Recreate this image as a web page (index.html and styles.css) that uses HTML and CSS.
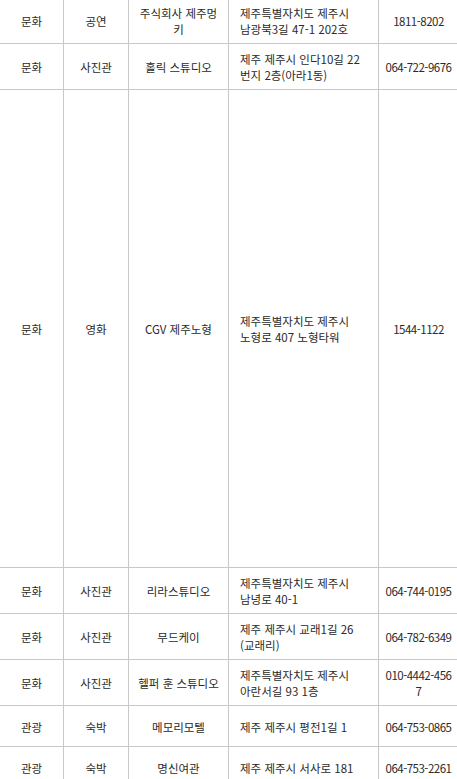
FILE: index.html
```html
<!DOCTYPE html>
<html lang="ko">
<head>
<meta charset="utf-8">
<title>목록</title>
<link rel="stylesheet" href="styles.css">
</head>
<body>
<table class="list">
  <tbody>
    <tr>
      <td class="c1">문화</td>
      <td class="c2">공연</td>
      <td class="c3">주식회사 제주멍키</td>
      <td class="c4">제주특별자치도 제주시 남광북3길 47-1 202호</td>
      <td class="c5">1811-8202</td>
    </tr>
    <tr>
      <td class="c1">문화</td>
      <td class="c2">사진관</td>
      <td class="c3">홀릭 스튜디오</td>
      <td class="c4">제주 제주시 인다10길 22 번지 2층(아라1동)</td>
      <td class="c5">064-722-9676</td>
    </tr>
    <tr class="tall">
      <td class="c1">문화</td>
      <td class="c2">영화</td>
      <td class="c3">CGV 제주노형</td>
      <td class="c4">제주특별자치도 제주시 노형로 407 노형타워</td>
      <td class="c5">1544-1122</td>
    </tr>
    <tr>
      <td class="c1">문화</td>
      <td class="c2">사진관</td>
      <td class="c3">리라스튜디오</td>
      <td class="c4">제주특별자치도 제주시 남녕로 40-1</td>
      <td class="c5">064-744-0195</td>
    </tr>
    <tr>
      <td class="c1">문화</td>
      <td class="c2">사진관</td>
      <td class="c3">무드케이</td>
      <td class="c4">제주 제주시 교래1길 26 (교래리)</td>
      <td class="c5">064-782-6349</td>
    </tr>
    <tr>
      <td class="c1">문화</td>
      <td class="c2">사진관</td>
      <td class="c3">헬퍼 훈 스튜디오</td>
      <td class="c4">제주특별자치도 제주시 아란서길 93 1층</td>
      <td class="c5">010-4442-4567</td>
    </tr>
    <tr>
      <td class="c1">관광</td>
      <td class="c2">숙박</td>
      <td class="c3">메모리모텔</td>
      <td class="c4">제주 제주시 평전1길 1</td>
      <td class="c5">064-753-0865</td>
    </tr>
    <tr>
      <td class="c1">관광</td>
      <td class="c2">숙박</td>
      <td class="c3">명신여관</td>
      <td class="c4">제주 제주시 서사로 181</td>
      <td class="c5">064-753-2261</td>
    </tr>
  </tbody>
</table>
</body>
</html>
```
FILE: styles.css
```css
html, body {
  margin: 0;
  padding: 0;
  overflow: hidden;
  background: #ffffff;
}

body {
  font-family: "Noto Sans CJK KR", "Noto Sans", sans-serif;
  font-size: 11.5px;
  line-height: 16px;
  color: #2a2a2a;
}

.list {
  margin-top: -2px;
  border-collapse: separate;
  border-spacing: 0;
  table-layout: fixed;
  width: 459px;
}

.list td {
  box-sizing: border-box;
  height: 41px;
  padding: 7px 10px 6px;
  border-right: 1px solid #c8c8c8;
  border-bottom: 1px solid #c8c8c8;
  text-align: center;
  vertical-align: middle;
  word-break: normal;
  overflow-wrap: break-word;
}

.list .c1 { width: 64px; padding-left: 4px; padding-right: 4px; }
.list .c2 { width: 65px; padding-left: 4px; padding-right: 4px; }
.list .c3 { width: 100px; padding-left: 6px; padding-right: 6px; }
.list .c4 { width: 150px; text-align: left; padding-left: 11px; padding-right: 13px; word-break: keep-all; }
.list .c5 { width: 80px; padding-left: 5px; padding-right: 5px; letter-spacing: -0.5px; word-break: break-all; }

.list .tall td {
  height: 478px;
}
```
